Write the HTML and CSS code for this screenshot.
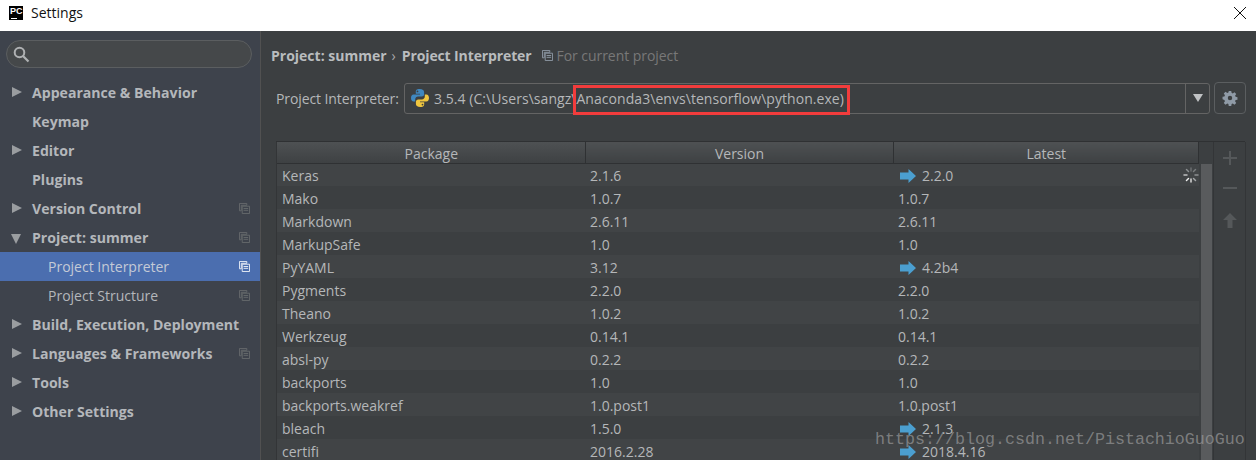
FILE: index.html
```html
<!DOCTYPE html>
<html lang="en">
<head>
  <meta charset="UTF-8" />
  <title>Settings</title>
  <link rel="stylesheet" href="styles.css">
</head>
<body>
  <svg class="defs" width="0" height="0">
    <symbol id="scope" viewBox="0 0 12 12">
      <path d="M.5.5h8v2h-6v6h-2z" fill="none" stroke="currentColor"/>
      <path d="M3.5 3.500h8v8h-8z" fill="none" stroke="currentColor"/>
      <path d="M5 6h5M5 8h5" stroke="currentColor"/>
    </symbol>
    <symbol id="up" viewBox="0 0 16 14">
      <path d="M0 3.500h8.500V0L16 7l-7.500 7v-3.500H0z" fill="#4b9fd0"/>
    </symbol>
  </svg>

  <header class="titlebar">
    <div class="pc-logo">PC<i></i></div>
    <span class="title">Settings</span>
    <svg class="close" width="12" height="12" viewBox="0 0 12 12"><path d="M0 0l12 12M12 0L0 12" stroke="#111" fill="none"/></svg>
  </header>

  <div class="window">
    <aside class="sidebar">
      <div class="search">
        <svg width="17" height="17" viewBox="0 0 17 17"><circle cx="6.500" cy="6.500" r="4.800" fill="none" stroke="#afb1b3" stroke-width="2"/><path d="M10 10l5.500 5.500" stroke="#afb1b3" stroke-width="2.200"/></svg>
      </div>
      <ul class="tree">
        <li class="item"><b class="arrow"></b>Appearance &amp; Behavior</li>
        <li class="item">Keymap</li>
        <li class="item"><b class="arrow"></b>Editor</li>
        <li class="item">Plugins</li>
        <li class="item"><b class="arrow"></b>Version Control<svg class="scope"><use href="#scope"/></svg></li>
        <li class="item"><b class="arrow open"></b>Project: summer<svg class="scope"><use href="#scope"/></svg></li>
        <li class="item child selected">Project Interpreter<svg class="scope"><use href="#scope"/></svg></li>
        <li class="item child">Project Structure<svg class="scope"><use href="#scope"/></svg></li>
        <li class="item"><b class="arrow"></b>Build, Execution, Deployment</li>
        <li class="item"><b class="arrow"></b>Languages &amp; Frameworks<svg class="scope"><use href="#scope"/></svg></li>
        <li class="item"><b class="arrow"></b>Tools</li>
        <li class="item"><b class="arrow"></b>Other Settings</li>
      </ul>
    </aside>

    <main class="content">
      <div class="crumbs">
        <strong>Project: summer</strong>
        <span class="sep">›</span>
        <strong class="tight">Project Interpreter</strong>
        <svg class="scope"><use href="#scope"/></svg>
        <span class="hint">For current project</span>
      </div>

      <div class="interpreter">
        <label>Project Interpreter:</label>
        <div class="combo">
          <svg class="python" width="18" height="18" viewBox="0 0 18 18">
            <path d="M8.800 0C5 0 4.800 1.500 4.800 3v1.800H9v.8H2.500C1 5.600 0 7 0 9s1 3.600 2.600 3.600h1.600v-2.200c0-1.600 1.300-2.900 2.900-2.900h3.700c1.300 0 2.300-1 2.300-2.300V3c0-1.600-1.500-3-4.300-3zM6.500 1.500a.9.9 0 110 1.800.9.9 0 010-1.800z" fill="#3f87bf"/>
            <path d="M9.200 18c3.800 0 4-1.500 4-3v-1.800H9v-.8h6.500c1.500 0 2.500-1.400 2.500-3.400s-1-3.600-2.600-3.600h-1.600v2.200c0 1.600-1.300 2.900-2.900 2.900H7.200c-1.300 0-2.300 1-2.300 2.300V15c0 1.600 1.500 3 4.300 3zm2.300-1.500a.9.9 0 110-1.800.9.9 0 010 1.800z" fill="#f0c63f"/>
          </svg>
          <span class="path">3.5.4 (C:\Users\sangz\Anaconda3\envs\tensorflow\python.exe)</span>
          <span class="drop"><b></b></span>
          <div class="redbox"></div>
        </div>
        <button class="gear">
          <svg width="16" height="16" viewBox="-1 -1 18 18"><path fill-rule="evenodd" fill="#8f9aa6" d="M6.600 0h2.800l.4 2.200 1.300.6 1.900-1.300 2 2-1.300 1.900.6 1.300 2.100.4v2.800l-2.100.4-.6 1.300 1.300 1.900-2 2-1.900-1.300-1.300.6-.4 2.200H6.600l-.4-2.200-1.300-.6-1.900 1.300-2-2 1.300-1.900-.6-1.300L-.4 9.400V6.600l2.100-.4.6-1.300-1.300-1.900 2-2 1.900 1.300 1.300-.6zM8 5.500a2.500 2.500 0 100 5 2.500 2.500 0 000-5z"/></svg>
        </button>
      </div>

      <div class="packages">
        <div class="table-wrap">
          <table>
            <thead>
              <tr><th>Package</th><th>Version</th><th>Latest</th></tr>
            </thead>
            <tbody>
              <tr><td>Keras</td><td>2.1.6</td><td class="latest"><svg class="up"><use href="#up"/></svg>2.2.0
                <svg class="spinner" width="16" height="16" viewBox="0 0 16 16" stroke-width="1.500" stroke-linecap="round">
                  <path d="M8 1v3" stroke="#6b6e70"/><path d="M12.500 2.500l-2 2" stroke="#7a7d7f"/><path d="M15 8h-3" stroke="#8c8f91"/><path d="M12.500 13.500l-2-2" stroke="#a5a7a9"/><path d="M8 15v-3" stroke="#d8d8d8"/><path d="M3.500 13.500l2-2" stroke="#f0f0f0"/><path d="M1 8h3" stroke="#bdbfc0"/><path d="M3.500 2.500l2 2" stroke="#8c8f91"/>
                </svg></td></tr>
              <tr><td>Mako</td><td>1.0.7</td><td>1.0.7</td></tr>
              <tr><td>Markdown</td><td>2.6.11</td><td>2.6.11</td></tr>
              <tr><td>MarkupSafe</td><td>1.0</td><td>1.0</td></tr>
              <tr><td>PyYAML</td><td>3.12</td><td class="latest"><svg class="up"><use href="#up"/></svg>4.2b4</td></tr>
              <tr><td>Pygments</td><td>2.2.0</td><td>2.2.0</td></tr>
              <tr><td>Theano</td><td>1.0.2</td><td>1.0.2</td></tr>
              <tr><td>Werkzeug</td><td>0.14.1</td><td>0.14.1</td></tr>
              <tr><td>absl-py</td><td>0.2.2</td><td>0.2.2</td></tr>
              <tr><td>backports</td><td>1.0</td><td>1.0</td></tr>
              <tr><td>backports.weakref</td><td>1.0.post1</td><td>1.0.post1</td></tr>
              <tr><td>bleach</td><td>1.5.0</td><td class="latest"><svg class="up"><use href="#up"/></svg>2.1.3</td></tr>
              <tr><td>certifi</td><td>2016.2.28</td><td class="latest"><svg class="up"><use href="#up"/></svg>2018.4.16</td></tr>
            </tbody>
          </table>
        </div>
        <div class="scrollbar"><div class="thumb"></div></div>
        <div class="tools">
          <svg width="16" height="16" viewBox="0 0 16 16"><path d="M8 1v14M1 8h14" stroke="#55585a" stroke-width="2"/></svg>
          <svg width="16" height="16" viewBox="0 0 16 16"><path d="M1 8h14" stroke="#55585a" stroke-width="2"/></svg>
          <svg class="arrow-up" width="16" height="15" viewBox="0 0 16 15"><path d="M8 0l7 7h-4.500v8h-5V7H1z" fill="#55585a"/></svg>
        </div>
      </div>
    </main>
  </div>

  <div class="watermark">https://blog.csdn.net/PistachioGuoGuo</div>
</body>
</html>
```

FILE: styles.css
```css
* {
  box-sizing: border-box;
}

html, body {
  height: 100%;
}

body {
  margin: 0;
  overflow: hidden;
  position: relative;
  font-family: 'Open Sans', 'Noto Sans', sans-serif;
  font-size: 14px;
  color: #b5b7b9;
  background: #3c3f41;
}

.defs {
  position: absolute;
}

.titlebar {
  height: 31px;
  background: #fff;
  display: flex;
  align-items: center;
  padding: 0 10px 6px 9px;
}

.pc-logo {
  width: 14px;
  height: 14px;
  background: #000;
  color: #fff;
  font: bold 9px/10px 'Liberation Sans', sans-serif;
  padding-left: 1px;
  position: relative;
}

.pc-logo i {
  position: absolute;
  left: 2px;
  bottom: 1px;
  width: 6px;
  height: 1px;
  background: #fff;
}

.title {
  margin-left: 8px;
  color: #111;
  font-size: 14px;
  flex: 1;
}

.window {
  display: flex;
  height: 429px;
}

.sidebar {
  width: 261px;
  flex: none;
  background: #3e434c;
  border-right: 1px solid #515151;
  padding-top: 9px;
}

.search {
  width: 246px;
  height: 28px;
  margin-left: 6px;
  border: 1px solid #5b5e60;
  border-radius: 14px;
  background: #45484a;
  padding: 5px 0 0 6px;
}

.search svg {
  display: block;
}

.tree {
  list-style: none;
  margin: 10px 0 0;
  padding: 0;
}

.item {
  height: 29px;
  line-height: 29px;
  padding-left: 32px;
  font-weight: 700;
  font-size: 14.1px;
  color: #b4b7bb;
  position: relative;
  display: flex;
  align-items: center;
}

.item .scope {
  margin-left: auto;
  margin-right: 10px;
  color: #666a6c;
}

.child {
  padding-left: 48px;
  font-weight: 400;
  font-size: 14px;
}

.selected {
  background: #4b6eaf;
  color: #c4cad6;
}

.selected .scope {
  color: #f0f3f8;
}

.scope {
  width: 11px;
  height: 11px;
  flex: none;
}

.arrow {
  position: absolute;
  left: 12px;
  top: 9px;
  border-left: 10px solid #9a9da0;
  border-top: 5px solid transparent;
  border-bottom: 5px solid transparent;
}

.arrow.open {
  left: 11px;
  top: 11px;
  border-top: 10px solid #9a9da0;
  border-left: 5px solid transparent;
  border-right: 5px solid transparent;
  border-bottom: 0;
}

.content {
  flex: 1;
  min-width: 0;
  padding: 14px 11px 0 15px;
}

.crumbs {
  display: flex;
  align-items: center;
  height: 22px;
  margin-left: -5px;
  padding-bottom: 2px;
}

.crumbs strong {
  color: #b9bcbe;
  font-weight: 700;
}

.crumbs .tight {
  letter-spacing: -0.12px;
}

.crumbs .sep {
  margin: 0 6px 0 5px;
  color: #aaa;
}

.crumbs .scope {
  margin-left: 10px;
  color: #8f9aa6;
}

.hint {
  margin-left: 4px;
  color: #787878;
  letter-spacing: -0.05px;
}

.interpreter {
  display: flex;
  align-items: center;
  margin-top: 15px;
  height: 32px;
}

.interpreter label {
  margin-right: 5px;
  width: 123px;
  flex: none;
  white-space: nowrap;
  letter-spacing: -0.1px;
}

.combo {
  position: relative;
  width: 806px;
  height: 31px;
  flex: none;
  border: 1px solid #646464;
  border-radius: 3px;
  display: flex;
  align-items: center;
  padding-left: 6px;
}

.python {
  flex: none;
}

.path {
  margin-left: 5px;
  flex: 1;
  white-space: nowrap;
  letter-spacing: 0.05px;
}

.drop {
  width: 24px;
  height: 100%;
  border-left: 1px solid #646464;
  flex: none;
  display: flex;
  align-items: center;
  justify-content: center;
}

.drop b {
  border-top: 8px solid #c0c2c4;
  border-left: 5px solid transparent;
  border-right: 5px solid transparent;
}

.redbox {
  position: absolute;
  left: 168px;
  top: 1px;
  width: 277px;
  height: 30px;
  border: 3px solid #f23c3c;
}

.gear {
  width: 32px;
  height: 32px;
  margin-left: 4px;
  padding: 0;
  flex: none;
  background: none;
  border: 1px solid #5b5e60;
  border-radius: 4px;
  display: flex;
  align-items: center;
  justify-content: center;
}

.packages {
  display: flex;
  margin-top: 27px;
  height: 320px;
  border-top: 1px solid #2f3133;
}

.table-wrap {
  width: 923px;
  flex: none;
  border-left: 1px solid #333537;
}

table {
  width: 922px;
  border-collapse: collapse;
  table-layout: fixed;
}

th {
  height: 21px;
  padding: 3px 0 0 1px;
  font-weight: 400;
  line-height: 17px;
  background: linear-gradient(#4e5153, #3e4143);
  border-right: 1px solid #2f3133;
  border-bottom: 1px solid #2f3133;
}

th:first-child,
th:nth-child(2) {
  width: 308px;
}

td {
  height: 23px;
  padding: 1px 0 0 5px;
  white-space: nowrap;
}

tbody tr:nth-child(odd) {
  background: #414446;
}

.latest {
  position: relative;
}

.up {
  width: 16px;
  height: 14px;
  margin: 0 6px 0 2px;
  vertical-align: -2px;
}

.spinner {
  position: absolute;
  right: 0;
  top: 3px;
}

.scrollbar {
  width: 14px;
  flex: none;
  padding: 22px 1px 0 2px;
}

.thumb {
  height: 298px;
  background: #595b5d;
}

.tools {
  width: 33px;
  flex: none;
  border-left: 1px solid #333537;
  border-right: 1px solid #333537;
  padding-top: 8px;
  display: flex;
  flex-direction: column;
  align-items: center;
  gap: 14px;
}

.arrow-up {
  margin-top: 3px;
}

.watermark {
  position: absolute;
  left: 875px;
  top: 430px;
  font: 16.67px/20px 'Liberation Mono', monospace;
  color: rgba(160, 160, 160, 0.65);
  white-space: nowrap;
}
```
